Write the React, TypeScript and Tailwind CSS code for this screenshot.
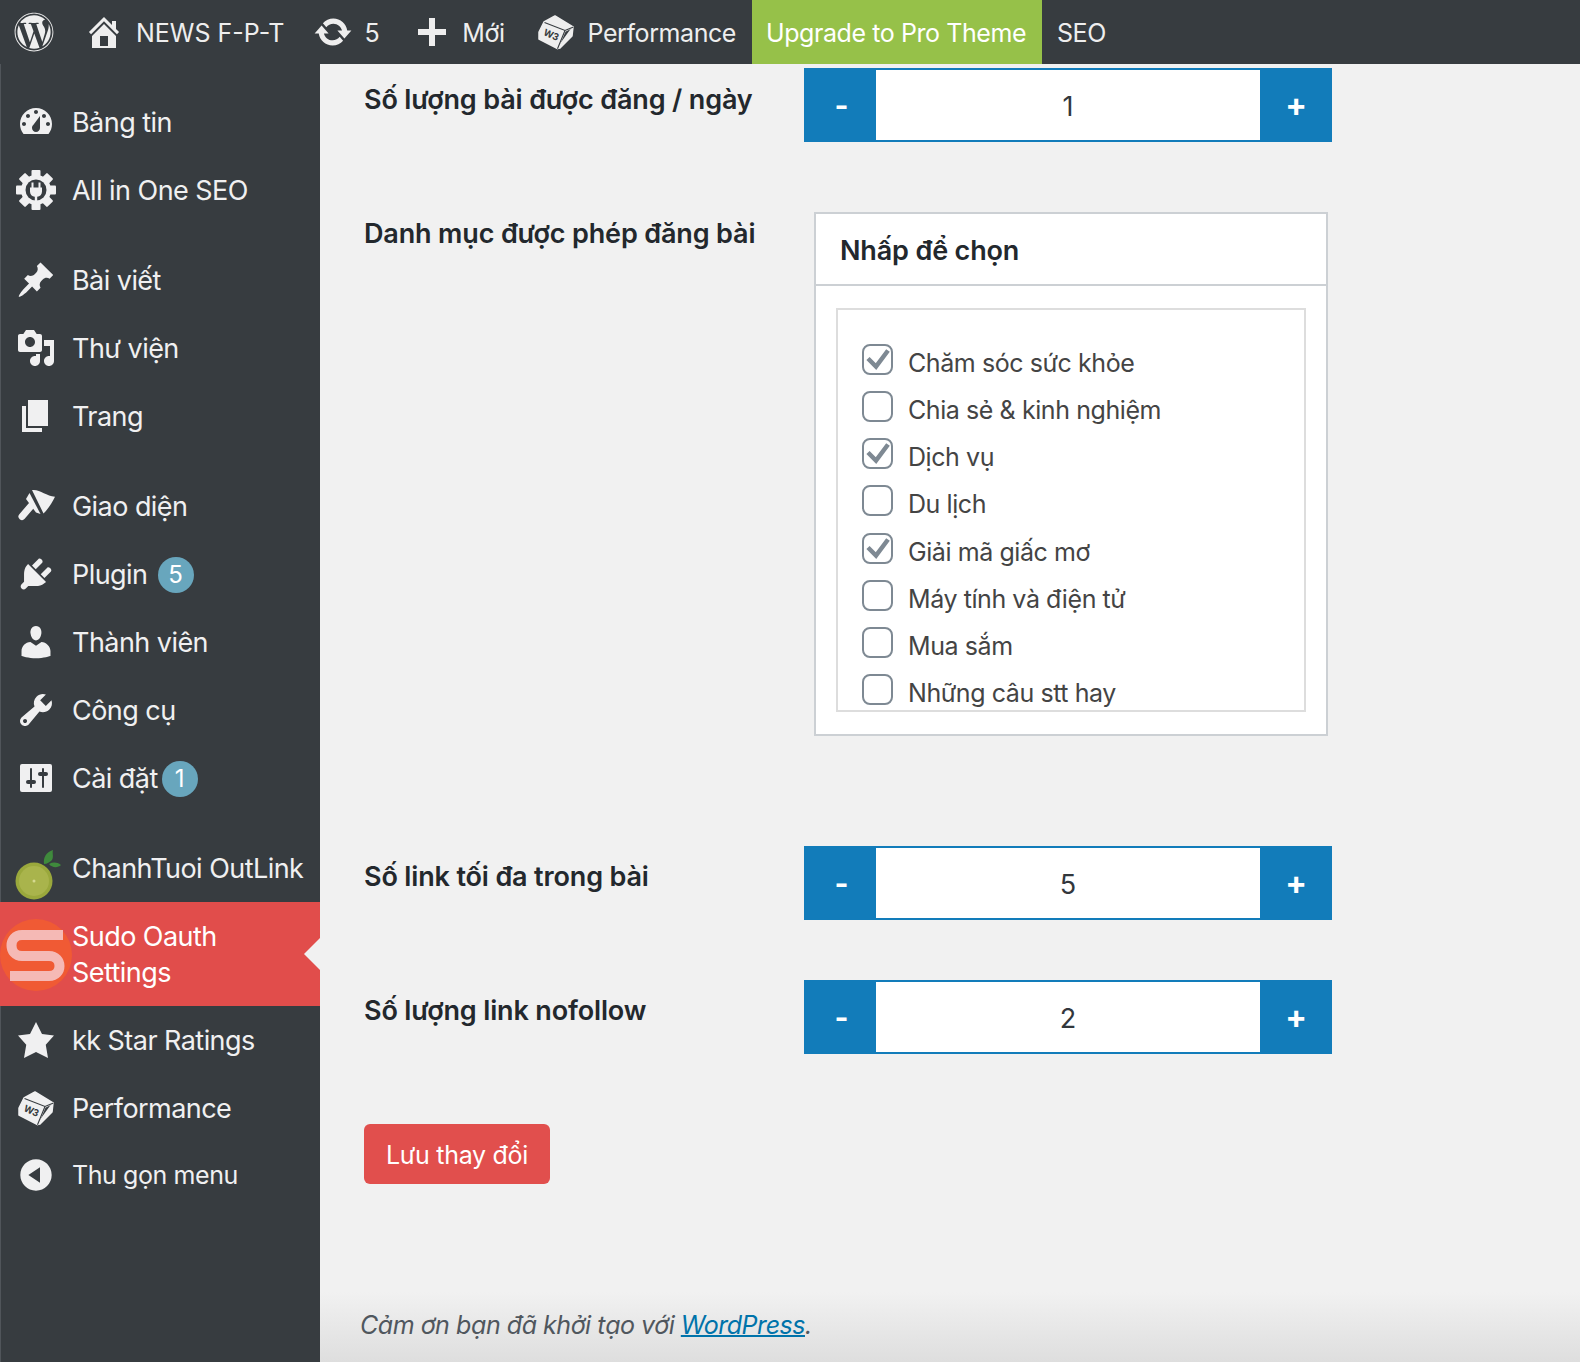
import React from 'react';
import { FaWordpress } from 'react-icons/fa';

const D = ({ d, className = 'w-10 h-10' }: { d: string; className?: string }) => (
  <svg viewBox="0 0 20 20" className={`${className} shrink-0 fill-current`}>
    <path fillRule="evenodd" d={d} />
  </svg>
);

const icons = {
  dashboard:
    'M3.76 16h12.48c1.1-1.37 1.76-3.11 1.76-5 0-4.42-3.58-8-8-8s-8 3.58-8 8c0 1.89.66 3.63 1.76 5zM10 4c.55 0 1 .45 1 1s-.45 1-1 1-1-.45-1-1 .45-1 1-1zM6 6c.55 0 1 .45 1 1s-.45 1-1 1-1-.45-1-1 .45-1 1-1zm8 0c.55 0 1 .45 1 1s-.45 1-1 1-1-.45-1-1 .45-1 1-1zm-5.37 5.55L12 7v6c0 1.1-.9 2-2 2s-2-.9-2-2c0-.57.24-1.08.63-1.45zM4 10c.55 0 1 .45 1 1s-.45 1-1 1-1-.45-1-1 .45-1 1-1zm12 0c.55 0 1 .45 1 1s-.45 1-1 1-1-.45-1-1 .45-1 1-1z',
  pin: 'M10.44 3.02l1.82-1.82 6.36 6.35-1.83 1.82c-1.05-.68-2.48-.57-3.41.36l-.75.75c-.92.93-1.04 2.35-.35 3.41l-1.83 1.82-2.41-2.41-2.8 2.79c-.42.42-3.38 2.71-3.8 2.29s1.86-3.39 2.28-3.81l2.79-2.79L4.1 9.36l1.83-1.82c1.05.69 2.48.57 3.4-.36l.75-.75c.93-.92 1.05-2.35.36-3.41z',
  media:
    'M13 11V4c0-.55-.45-1-1-1h-1.67L9 1H5L3.67 3H2c-.55 0-1 .45-1 1v7c0 .55.45 1 1 1h10c.55 0 1-.45 1-1zM7 4.5c1.38 0 2.5 1.12 2.5 2.5S8.38 9.5 7 9.5 4.5 8.38 4.5 7 5.62 4.5 7 4.5zM14 6h5v10.5c0 1.38-1.12 2.5-2.5 2.5S14 17.88 14 16.5s1.12-2.5 2.5-2.5c.17 0 .34.02.5.05V9h-3V6zm-4 8.05V13h2v3.5c0 1.38-1.12 2.5-2.5 2.5S7 17.88 7 16.5 8.12 14 9.5 14c.17 0 .34.02.5.05z',
  page: 'M6 15V2h10v13H6zm-1 1h8v2H3V5h2v11z',
  plug: 'M13.11 4.36L9.87 7.6 8 5.73l3.24-3.24c.35-.34 1.05-.2 1.56.32.52.51.66 1.21.31 1.55zm-8 1.77l.91-1.12 9.01 9.01-1.19.84c-.71.71-2.63 1.16-3.82 1.16H6.14L4.9 17.26c-.59.59-1.54.59-2.12 0-.59-.58-.59-1.53 0-2.12l1.24-1.24v-3.88c0-1.13.4-3.19 1.09-3.89zm7.26 3.97l3.24-3.24c.34-.35 1.04-.21 1.55.31.52.51.66 1.21.31 1.55l-3.24 3.25z',
  user: 'M10 9.25c-2.27 0-2.73-3.44-2.73-3.44C7 4.02 7.82 2 9.97 2c2.16 0 2.98 2.02 2.71 3.81 0 0-.41 3.44-2.68 3.44zm0 2.57L12.72 10c2.39 0 4.52 2.33 4.52 4.53v2.49s-3.65 1.13-7.24 1.13c-3.65 0-7.24-1.13-7.24-1.13v-2.49c0-2.25 1.94-4.48 4.47-4.48z',
  tools:
    'M16.68 9.77c-1.34 1.34-3.3 1.67-4.95.99l-5.41 6.52c-.99.99-2.59.99-3.58 0s-.99-2.59 0-3.57l6.52-5.42c-.68-1.65-.35-3.61.99-4.95 1.28-1.28 3.12-1.62 4.72-1.06l-2.89 2.89 2.82 2.82 2.86-2.87c.53 1.58.18 3.39-1.08 4.65zM3.81 16.21c.4.39 1.04.39 1.43 0 .4-.4.4-1.04 0-1.43-.39-.4-1.03-.4-1.43 0-.39.39-.39 1.03 0 1.43z',
  star: 'M10 1l3 6 6 .75-4.12 4.62L16 19l-6-3-6 3 1.13-6.63L1 7.75 7 7z',
  collapse:
    'M10 2.16c4.33 0 7.84 3.51 7.84 7.84s-3.51 7.84-7.84 7.84S2.16 14.33 2.16 10 5.71 2.16 10 2.16zm2 11.72V6.12L6.18 9.97z',
  home: 'M16 8.5l1.53 1.53-1.06 1.06L10 4.62l-6.47 6.47-1.06-1.06L10 2.5l4 4v-2h2v4zm-6-2.46l6 5.99V18H4v-5.97zM12 17v-5H8v5h4z',
  update:
    'M10.2 3.28c3.53 0 6.43 2.61 6.92 6h2.08l-3.5 4-3.5-4h2.32c-.45-1.97-2.21-3.45-4.32-3.45-1.45 0-2.73.71-3.54 1.78L4.95 5.66C6.23 4.2 8.11 3.28 10.2 3.28zm-.4 13.44c-3.52 0-6.43-2.61-6.92-6H.8l3.5-4c1.17 1.33 2.33 2.67 3.5 4H5.48c.45 1.97 2.21 3.45 4.32 3.45 1.45 0 2.73-.71 3.54-1.78l1.71 1.95c-1.28 1.46-3.15 2.38-5.25 2.38z',
  plus: 'M17 8.5v3h-5.5V17h-3v-5.5H3v-3h5.5V3h3v5.5H17z',
};

const Settings = () => (
  <svg viewBox="0 0 20 20" className="h-10 w-10 shrink-0">
    <rect x="2" y="3" width="16" height="14" rx="1" fill="currentColor" />
    <g fill="#373c40">
      <rect x="7" y="5" width="1" height="10" rx="0.5" />
      <rect x="5" y="11" width="5" height="2" rx="1" />
      <rect x="13" y="5" width="1" height="10" rx="0.5" />
      <rect x="11" y="7" width="5" height="2" rx="1" />
    </g>
  </svg>
);

const Brush = () => (
  <svg viewBox="0 0 40 40" className="h-10 w-10 shrink-0">
    <path fill="currentColor" d="M16 4C24 3 30 10 39 10.7C36 17 32 23 27.5 27.5Z" />
    <path fill="currentColor" d="M13.5 7L24.5 28L20 26.5L10 13Z" />
    <path fill="none" stroke="currentColor" strokeWidth="7" strokeLinecap="round" d="M15 20L6 30.5" />
  </svg>
);

const W3Cube = ({ className = 'w-10 h-10' }: { className?: string }) => (
  <svg viewBox="0 0 40 40" className={`${className} shrink-0`}>
    <path
      fill="currentColor"
      stroke="currentColor"
      strokeWidth="1.5"
      strokeLinejoin="round"
      d="M19 4 L37 15 L29 19 L21.5 36.5 L3 27 L3 20 L8 10 Z"
    />
    <path fill="currentColor" stroke="currentColor" strokeWidth="1.5" strokeLinejoin="round" d="M37 15 L36 24 L24 36 L21.5 36.5 Z" />
    <path fill="none" stroke="#373c40" strokeWidth="1.1" d="M8.5 10.5 L29 18.5 L37.5 15 M29 18.5 L21.5 36.8" />
    <text
      x="15"
      y="26"
      fontSize="9.5"
      fontWeight="700"
      textAnchor="middle"
      fill="#373c40"
      fontFamily="Inter, sans-serif"
      transform="rotate(24 15 23)"
    >
      W3
    </text>
  </svg>
);

const GearPlug = () => (
  <svg viewBox="0 0 40 40" className="h-10 w-10 shrink-0">
    <g fill="currentColor">
      {[0, 45, 90, 135, 180, 225, 270, 315].map((a) => (
        <rect key={a} x="15.5" y="0" width="9" height="10" rx="1" transform={`rotate(${a} 20 20)`} />
      ))}
      <circle cx="20" cy="20" r="15" />
    </g>
    <circle cx="20" cy="20" r="10.5" fill="#373c40" />
    <path fill="currentColor" d="M15.5 12.5h2v5h5v-5h2v5h1.5v4c0 3-2 5-4.8 5.3V31h-2.4v-4.2c-2.8-.3-4.8-2.3-4.8-5.3v-4h1.5z" />
  </svg>
);

const Lime = () => (
  <svg viewBox="0 0 48 50" className="h-[50px] w-12 shrink-0">
    <path fill="#3f8a3c" d="M29 14c-1-6 2-12 9-14-1 3 1 7-1 10-2 2-5 4-8 4zM34 14c4-2 8-2 12 1-3 3-9 3-12-1z" />
    <circle cx="19" cy="31" r="18.5" fill="#9aa83c" />
    <circle cx="19" cy="31" r="15" fill="#a9b44c" />
    <circle cx="19" cy="31" r="1.5" fill="#d5d98f" />
  </svg>
);

const SudoLogo = () => (
  <svg viewBox="0 0 72 72" className="h-[72px] w-[72px] shrink-0">
    <circle cx="36" cy="36" r="36" fill="#f05a34" />
    <path fill="none" stroke="#f5b9b5" strokeWidth="10" d="M63 16H22C8 16 8 37 22 37H49C63 37 63 57 49 57H10" />
  </svg>
);

type MenuItem = {
  label: string;
  icon: React.ReactNode;
  badge?: string;
  badgeClass?: string;
  gap?: boolean;
};

const menu: MenuItem[] = [
  { label: 'Bảng tin', icon: <D d={icons.dashboard} /> },
  { label: 'All in One SEO', icon: <GearPlug /> },
  { label: 'Bài viết', icon: <D d={icons.pin} />, gap: true },
  { label: 'Thư viện', icon: <D d={icons.media} /> },
  { label: 'Trang', icon: <D d={icons.page} /> },
  { label: 'Giao diện', icon: <Brush />, gap: true },
  { label: 'Plugin', icon: <D d={icons.plug} />, badge: '5', badgeClass: 'ml-[10px]' },
  { label: 'Thành viên', icon: <D d={icons.user} /> },
  { label: 'Công cụ', icon: <D d={icons.tools} /> },
  { label: 'Cài đặt', icon: <Settings />, badge: '1', badgeClass: 'ml-[4px]' },
];

const menuAfter: MenuItem[] = [
  { label: 'kk Star Ratings', icon: <D d={icons.star} /> },
  { label: 'Performance', icon: <W3Cube /> },
];

const MenuRow = ({ item }: { item: MenuItem }) => (
  <>
    {item.gap && <div className="h-[22px]" />}
    <div className="flex h-[68px] items-center pl-[15px] text-[27px] leading-9 tracking-[-0.55px]">
      <span className="flex w-10 justify-center">{item.icon}</span>
      <span className="ml-4 pt-[2px]">{item.label}</span>
      {item.badge && (
        <span
          className={`${item.badgeClass} mt-[2px] flex h-9 w-9 items-center justify-center rounded-full bg-[#68a6bd] text-[24px] tracking-normal text-white`}
        >
          {item.badge}
        </span>
      )}
    </div>
  </>
);

const Sidebar = () => (
  <aside className="w-80 shrink-0 border-l border-[#50555a] bg-[#373c40] pt-6 text-[#f0f0f1]">
    {menu.map((item) => (
      <MenuRow key={item.label} item={item} />
    ))}
    <div className="h-[22px]" />
    <div className="flex h-[68px] items-center text-[27px] leading-9 tracking-[-0.55px]">
      <span className="ml-[14px] mt-[14px] flex w-12">
        <Lime />
      </span>
      <span className="ml-[9px] pt-[2px]">ChanhTuoi OutLink</span>
    </div>
    <div className="relative -ml-px flex h-[104px] items-center bg-[#e14d4b] pt-[2px] text-[27px] leading-9 tracking-[-0.55px] text-white">
      <SudoLogo />
      <span className="w-[200px]">Sudo Oauth Settings</span>
      <span className="absolute right-0 top-9 h-0 w-0 border-y-[16px] border-r-[16px] border-y-transparent border-r-[#f1f1f1]" />
    </div>
    {menuAfter.map((item) => (
      <MenuRow key={item.label} item={item} />
    ))}
    <div className="flex h-[66px] items-center pl-[15px] text-[25px] leading-9 tracking-[-0.42px]">
      <span className="flex w-10 justify-center">
        <D d={icons.collapse} />
      </span>
      <span className="ml-4">Thu gọn menu</span>
    </div>
  </aside>
);

const TopBar = () => (
  <header className="flex h-16 items-center bg-[#373c40] text-[25px] tracking-[-0.42px] text-[#eeeeee]">
    <FaWordpress className="ml-[14px] h-10 w-10 shrink-0" />
    <div className="ml-[30px] flex items-center">
      <D d={icons.home} />
      <span className="ml-3 pt-1 tracking-normal">NEWS F-P-T</span>
    </div>
    <div className="ml-[29px] flex items-center">
      <D d={icons.update} />
      <span className="ml-[11px] pt-1">5</span>
    </div>
    <div className="ml-[33px] flex items-center">
      <D d={icons.plus} />
      <span className="ml-[10px] pt-1">Mới</span>
    </div>
    <div className="ml-[31px] flex items-center">
      <W3Cube />
      <span className="ml-3 pt-1">Performance</span>
    </div>
    <div className="ml-4 flex h-full w-[290px] items-center bg-[#96c149] pl-[14px] pt-1 text-white">Upgrade to Pro Theme</div>
    <span className="ml-[15px] pt-1">SEO</span>
  </header>
);

const Stepper = ({ value }: { value: string }) => (
  <div className="flex h-[74px] w-[528px] items-stretch bg-[#127cba] py-[2px] text-white">
    <button className="flex w-[72px] items-center justify-center pl-[3px] text-[30px] font-bold">-</button>
    <div className="flex flex-1 items-center justify-center bg-white pt-1 text-[27px] text-[#32373c]">{value}</div>
    <button className="flex w-[72px] items-center justify-center text-[32px] font-bold">+</button>
  </div>
);

const Row = ({
  label,
  children,
  className = '',
  labelClass = 'pt-[13px]',
}: {
  label: string;
  children: React.ReactNode;
  className?: string;
  labelClass?: string;
}) => (
  <div className={`flex ${className}`}>
    <div className={`w-[440px] shrink-0 text-[27px] font-semibold leading-9 tracking-[-0.15px] text-[#23282d] ${labelClass}`}>
      {label}
    </div>
    {children}
  </div>
);

const categories = [
  { name: 'Chăm sóc sức khỏe', checked: true },
  { name: 'Chia sẻ & kinh nghiệm', checked: false },
  { name: 'Dịch vụ', checked: true },
  { name: 'Du lịch', checked: false },
  { name: 'Giải mã giấc mơ', checked: true },
  { name: 'Máy tính và điện tử', checked: false },
  { name: 'Mua sắm', checked: false },
  { name: 'Những câu stt hay', checked: false },
];

const CategoryPanel = () => (
  <div className="ml-[10px] h-[524px] w-[514px] border-2 border-[#ccd0d4] bg-white">
    <div className="flex h-[72px] items-center border-b-2 border-[#ccd0d4] pl-6 pt-1 text-[27px] font-semibold tracking-[-0.15px] text-[#23282d]">
      Nhấp để chọn
    </div>
    <div className="mx-5 mt-[22px] h-[404px] overflow-hidden border-2 border-[#dddddd] bg-white pl-6 pt-[34px]">
      {categories.map((c) => (
        <label key={c.name} className="flex h-[47.14px] items-start text-[25px] leading-9 tracking-[-0.42px] text-[#444444]">
          <span className="flex h-[31px] w-[31px] shrink-0 items-center justify-center rounded-lg border-2 border-[#7e8993] bg-white">
            {c.checked && (
              <svg viewBox="2 2 27 27" className="h-[27px] w-[27px]">
                <path d="M6 14.5 L14 22.5 L26 6.5" fill="none" stroke="#7e8993" strokeWidth="4.5" />
              </svg>
            )}
          </span>
          <span className="ml-[15px] mt-[1px]">{c.name}</span>
        </label>
      ))}
    </div>
  </div>
);

export default function App() {
  return (
    <div className="h-[1362px] w-[1580px] overflow-hidden bg-[#f1f1f1] font-['Inter',sans-serif]">
      <TopBar />
      <div className="flex h-[1298px]">
        <Sidebar />
        <main className="relative flex-1 pl-11 pt-1">
          <div className="absolute bottom-0 left-0 right-0 h-[70px] bg-gradient-to-b from-transparent to-[#dedede]" />
          <div className="relative">
            <Row label="Số lượng bài được đăng / ngày" labelClass="pt-[14px]">
              <Stepper value="1" />
            </Row>
            <Row label="Danh mục được phép đăng bài" labelClass="pt-1" className="mt-[70px]">
              <CategoryPanel />
            </Row>
            <Row label="Số link tối đa trong bài" className="mt-[110px]">
              <Stepper value="5" />
            </Row>
            <Row label="Số lượng link nofollow" className="mt-[60px]">
              <Stepper value="2" />
            </Row>
            <button className="mt-[70px] block h-[60px] w-[186px] rounded-md bg-[#e14f4d] pt-1 text-[25px] tracking-[-0.3px] text-white">
              Lưu thay đổi
            </button>
            <p className="-ml-1 mt-[123px] text-[25px] italic leading-9 tracking-[-0.47px] text-[#50575e]">
              Cảm ơn bạn đã khởi tạo với <a className="text-[#0073aa] underline decoration-2">WordPress</a>.
            </p>
          </div>
        </main>
      </div>
    </div>
  );
}
